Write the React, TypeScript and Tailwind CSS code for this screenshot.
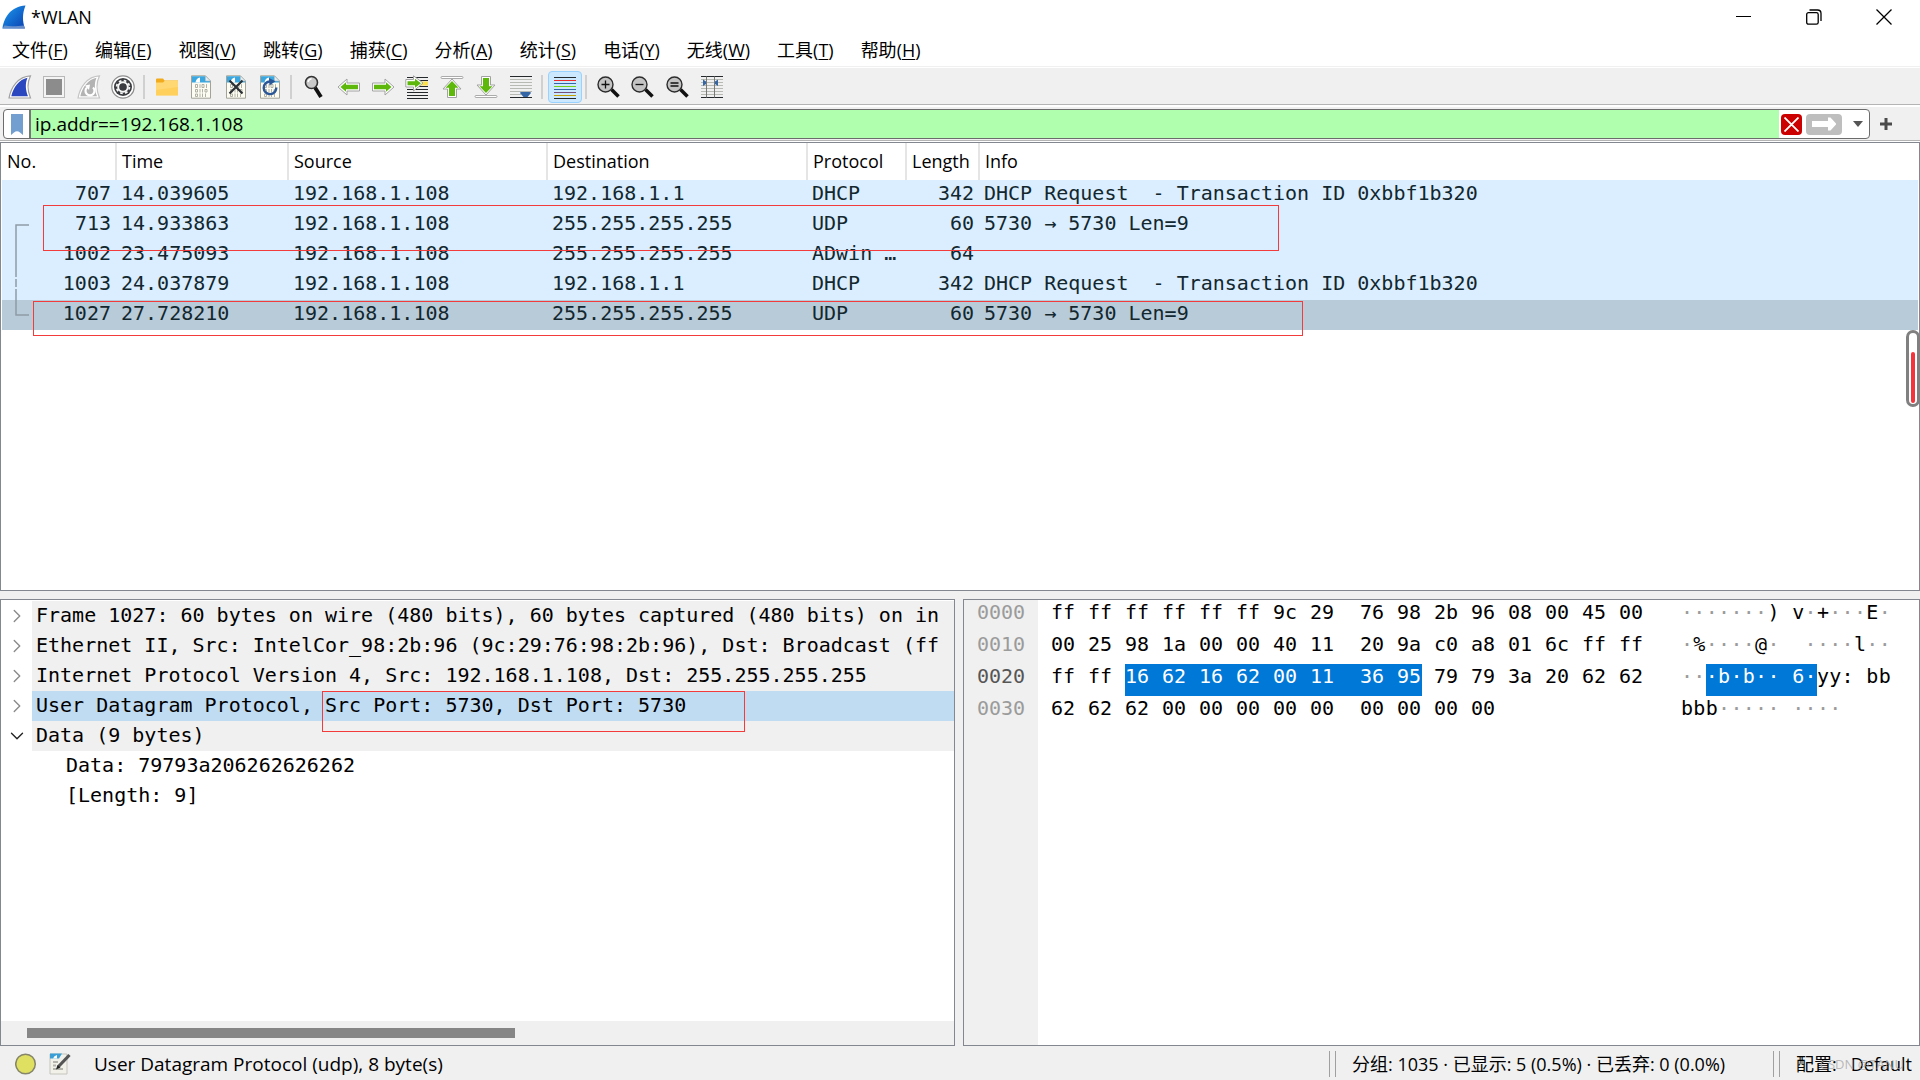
import React from "react";
import { ChevronDown, ChevronRight } from "lucide-react";

const menus = [
  ["文件", "F"],
  ["编辑", "E"],
  ["视图", "V"],
  ["跳转", "G"],
  ["捕获", "C"],
  ["分析", "A"],
  ["统计", "S"],
  ["电话", "Y"],
  ["无线", "W"],
  ["工具", "T"],
  ["帮助", "H"],
];

const columns = [
  { name: "No.", width: "w-[114px]" },
  { name: "Time", width: "w-[172px]" },
  { name: "Source", width: "w-[259px]" },
  { name: "Destination", width: "w-[260px]" },
  { name: "Protocol", width: "w-[99px]" },
  { name: "Length", width: "w-[73px]" },
  { name: "Info", width: "" },
];

const packets = [
  { no: 707, time: "14.039605", src: "192.168.1.108", dst: "192.168.1.1", proto: "DHCP", len: 342, info: "DHCP Request  - Transaction ID 0xbbf1b320" },
  { no: 713, time: "14.933863", src: "192.168.1.108", dst: "255.255.255.255", proto: "UDP", len: 60, info: "5730 → 5730 Len=9" },
  { no: 1002, time: "23.475093", src: "192.168.1.108", dst: "255.255.255.255", proto: "ADwin …", len: 64, info: "" },
  { no: 1003, time: "24.037879", src: "192.168.1.108", dst: "192.168.1.1", proto: "DHCP", len: 342, info: "DHCP Request  - Transaction ID 0xbbf1b320" },
  { no: 1027, time: "27.728210", src: "192.168.1.108", dst: "255.255.255.255", proto: "UDP", len: 60, info: "5730 → 5730 Len=9" },
];

const details = [
  "Frame 1027: 60 bytes on wire (480 bits), 60 bytes captured (480 bits) on in",
  "Ethernet II, Src: IntelCor_98:2b:96 (9c:29:76:98:2b:96), Dst: Broadcast (ff",
  "Internet Protocol Version 4, Src: 192.168.1.108, Dst: 255.255.255.255",
  "User Datagram Protocol, Src Port: 5730, Dst Port: 5730",
  "Data (9 bytes)",
];

const hexRows = [
  { offset: "0000", bytes: "ff ff ff ff ff ff 9c 29 76 98 2b 96 08 00 45 00", ascii: "·······)v·+···E·" },
  { offset: "0010", bytes: "00 25 98 1a 00 00 40 11 20 9a c0 a8 01 6c ff ff", ascii: "·%····@· ····l··" },
  { offset: "0020", bytes: "ff ff 16 62 16 62 00 11 36 95 79 79 3a 20 62 62", ascii: "···b·b··6·yy: bb" },
  { offset: "0030", bytes: "62 62 62 00 00 00 00 00 00 00 00 00", ascii: "bbb·········" },
];

// the udp header is bytes 2..9 of row 0x20
const isSelected = (row: number, i: number) => row === 2 && i >= 2 && i <= 9;

function Svg({ children }: { children: React.ReactNode }) {
  return (
    <svg width="24" height="24" viewBox="0 0 24 24" fill="none" aria-hidden="true" className="shrink-0">
      {children}
    </svg>
  );
}

function LogoIcon() {
  return (
    <svg width="24" height="24" viewBox="0 0 24 24" aria-hidden="true">
      <defs>
        <linearGradient id="fin" x1="0" y1="0" x2="1" y2="1">
          <stop offset="0" stopColor="#1c9cf0" />
          <stop offset="1" stopColor="#0a3fb0" />
        </linearGradient>
      </defs>
      <path d="M0.5 23.5C2 12 9 1.500 23.500 0.500C20 9 20.500 17 23 23.500Z" fill="url(#fin)" />
      <path d="M0.500 23.500L2.500 20.500C9 22 16 21 22 20.500L23 23.500Z" fill="#7d9dd0" opacity="0.800" />
    </svg>
  );
}

function FinIcon({ gray = false }: { gray?: boolean }) {
  return (
    <Svg>
      <path d="M1 23C3 12 10 1.500 22.500 0.800C19 8 19.500 16 22.500 23Z" fill="#fff" stroke={gray ? "#c4c4c4" : "#a0a0a0"} strokeWidth="1.200" />
      <path d="M3.300 21.300C5.500 12 11 4.500 19.500 2.800C17 9 17.500 15 20 21.300Z" fill={gray ? "#b3b3b3" : "#2b47c0"} />
      {gray && (
        <>
          <path d="M10 12.500A4.500 4.500 0 1 0 16 12.500" stroke="#fff" strokeWidth="2.200" />
          <path d="M8 10.500L13 9.500L12 15Z" fill="#fff" />
        </>
      )}
    </Svg>
  );
}

function StopIcon() {
  return (
    <Svg>
      <rect x="1.500" y="1.500" width="21" height="21" fill="#f4f4f4" stroke="#b8b8b8" />
      <rect x="4" y="4" width="16" height="16" fill="#8c8c8c" />
    </Svg>
  );
}

function GearIcon() {
  return (
    <Svg>
      <circle cx="12" cy="12" r="11.200" fill="#fff" stroke="#8e8e8e" strokeWidth="1.200" />
      <circle cx="12" cy="12" r="9" fill="#3a3c3f" />
      <circle cx="12" cy="12" r="4.800" stroke="#f5f5f5" strokeWidth="2" />
      <circle cx="12" cy="12" r="6.400" stroke="#f5f5f5" strokeWidth="1.800" strokeDasharray="2.600 2.427" />
      <circle cx="12" cy="12" r="3.200" fill="#3a3c3f" />
    </Svg>
  );
}

function FolderIcon() {
  return (
    <Svg>
      <path d="M1 4.500Q1 3.500 2 3.500H8L9.500 5.500H23V19.500H1Z" fill="#f2ab1c" />
      <path d="M1 7.500H8L10 5.500H22Q23 5.500 23 6.500V20.500H1Z" fill="#ffd773" />
      <path d="M1 15L23 12V20.500H1Z" fill="#ffcb4d" opacity="0.600" />
    </Svg>
  );
}

function FileIcon({ kind }: { kind?: string }) {
  return (
    <Svg>
      <path d="M2.500 0.800H16.500L21.500 6V23.200H2.500Z" fill="#fcfcf2" stroke="#a3a397" />
      <path d="M3 1.200H16.500V6H21V7.500H3Z" fill="#3aa7e0" />
      <path d="M6.500 7.500C7 4.500 8.500 3 11 2.500V7.500Z" fill="#fff" />
      <path d="M16.500 1V6H21.500Z" fill="#e4edf2" stroke="#a3b3bb" strokeWidth="0.600" />
      <g stroke="#a8a89c" strokeWidth="0.900">
        <path d="M6.500 9.500H8.500V12.500H6.500ZM11 9.200V13M13 9.500H15V12.500H13ZM17.500 9.200V13" />
        <path d="M6.500 14.500H8.500V17H6.500ZM11 14V17.500M13.500 14V17.500M16 14.500H18V17H16Z" />
        <path d="M6.500 19H8.500V21.500H6.500ZM11 18.500V22M13.500 18.500V22M16.500 18.500V22" />
      </g>
      {kind === "close" && <path d="M5.500 5.500L18.500 18.500M18.500 5.500L5.500 18.500" stroke="#2b3035" strokeWidth="2.200" />}
      {kind === "reload" && (
        <>
          <path d="M12 6.500A6.300 6.300 0 1 0 18.300 12.500" stroke="#2b5796" strokeWidth="2.400" />
          <path d="M11 3L17.500 6.200L11.500 10.500Z" fill="#2b5796" />
        </>
      )}
    </Svg>
  );
}

function FindIcon() {
  return (
    <Svg>
      <path d="M13 12.500L19 22" stroke="#111" strokeWidth="3.800" />
      <circle cx="9.500" cy="7.500" r="6" fill="#c9c9c9" stroke="#333" strokeWidth="1.600" />
      <path d="M6 7A4 4 0 0 1 9.500 3.800" stroke="#fff" strokeWidth="1.500" />
    </Svg>
  );
}

function ZoomIcon({ kind }: { kind: string }) {
  return (
    <Svg>
      <path d="M14.500 14.500L21.500 21.500" stroke="#111" strokeWidth="3.600" />
      <circle cx="8.500" cy="9.500" r="7.500" fill="#c3c3c3" stroke="#2c2c2c" strokeWidth="1.400" />
      {kind === "in" && <path d="M4.500 9.500H12.500M8.500 5.500V13.500" stroke="#111" strokeWidth="1.300" />}
      {kind === "out" && <path d="M4.500 9.500H12.500" stroke="#111" strokeWidth="1.300" />}
      {kind === "reset" && <path d="M4.500 8H12.500M4.500 11H12.500" stroke="#111" strokeWidth="1.300" />}
    </Svg>
  );
}

function ArrowIcon({ dir }: { dir: "left" | "right" }) {
  return (
    <Svg>
      <g transform={dir === "right" ? "translate(24 0) scale(-1 1)" : undefined}>
        <path d="M1 12L10 4V8H22.500V16H10V20Z" fill="#fff" stroke="#a2a2a2" strokeLinejoin="round" />
        <path d="M3.500 12L9 7.200V9.700H21V14.300H9V16.800Z" fill="#5db80b" />
      </g>
    </Svg>
  );
}

function GotoIcon() {
  return (
    <Svg>
      <path d="M2 2.500H23M14 5.500H23M14 11.500H23M2 14.500H23M2 17.500H23M2 20.500H23M2 23.500H23" stroke="#26292c" />
      <path d="M15 8.500H23" stroke="#fbe14c" strokeWidth="4" />
      <path d="M0.800 4.500H8.500V0.800L18 8L8.500 16V12H0.800Z" fill="#fff" stroke="#a2a2a2" strokeLinejoin="round" />
      <path d="M2.500 6.200H10V3.800L16 8.200L10 12.800V10.300H2.500Z" fill="#5db80b" />
    </Svg>
  );
}

function EdgeIcon({ dir }: { dir: "top" | "bottom" }) {
  return (
    <Svg>
      <g transform={dir === "bottom" ? "translate(0 24) scale(1 -1)" : undefined}>
        <rect x="1" y="1.500" width="22" height="2" rx="1" fill="#fff" stroke="#a2a2a2" strokeWidth="0.900" />
        <path d="M12 4L21 14H16.500V22.500H7.500V14H3Z" fill="#fff" stroke="#a2a2a2" strokeLinejoin="round" />
        <path d="M12 6L18.500 12.800H15V21H9V12.800H5.500Z" fill="#5db80b" />
      </g>
    </Svg>
  );
}

function AutoScrollIcon() {
  return (
    <Svg>
      <path d="M1 1.500H23M1 22.500H23" stroke="#26292c" />
      <path d="M1 4.500H23M1 7.500H23M1 10.500H23M1 13.500H23M1 16.500H23M1 19.500H12" stroke="#b7bab2" />
      <path d="M11 18Q11 17 12.500 17H20.500Q22 17 22 18L18.500 22H14.500Z" fill="#3465a4" />
    </Svg>
  );
}

function ColorizeIcon() {
  return (
    <Svg>
      <path d="M1 2.500H23" stroke="#26292c" />
      <path d="M1 5.500H23" stroke="#ef2929" />
      <path d="M1 8.500H23" stroke="#3465a4" />
      <path d="M1 11.500H23" stroke="#73d216" />
      <path d="M1 14.500H23" stroke="#3465a4" />
      <path d="M1 17.500H23" stroke="#75507b" />
      <path d="M1 20.500H23" stroke="#c4a000" />
      <path d="M1 23.500H23" stroke="#26292c" />
    </Svg>
  );
}

function ResizeIcon() {
  return (
    <Svg>
      <path d="M1 4.500H23M1 7.500H23M1 10.500H23M1 13.500H23M1 16.500H23M1 19.500H23" stroke="#b7bab2" />
      <path d="M1 1.500H23M1 22.500H23" stroke="#26292c" />
      <path d="M6.500 1.500V22.500M14.500 1.500V22.500" stroke="#777a75" />
      <path d="M3 4.500L6 6.500V9L3 11ZM18 4.500L15 6.500V9L18 11Z" fill="#3465a4" />
    </Svg>
  );
}

function ToolButton({ label, active, children }: { label: string; active?: boolean; children: React.ReactNode }) {
  return (
    <button
      aria-label={label}
      className={
        active
          ? "flex h-8 w-[34px] items-center justify-center rounded-sm border border-[#99d1ff] bg-[#cce8ff]"
          : "flex h-8 flex-1 items-center justify-center"
      }
    >
      {children}
    </button>
  );
}

function Separator() {
  return (
    <div className="flex w-[10px] shrink-0 pl-[3px]">
      <div className="h-6 w-[2px] bg-[#d0d0d0]" />
    </div>
  );
}

function TitleBar() {
  return (
    <header className="flex h-[34px] items-center bg-white pl-[2px]">
      <LogoIcon />
      <h1 className="ml-[5px]">*WLAN</h1>
      <div className="ml-auto flex items-center gap-[54px] pr-[28px]">
        <button aria-label="Minimize">
          <svg width="16" height="16" viewBox="0 0 16 16" stroke="#000">
            <path d="M0 7.500H15" />
          </svg>
        </button>
        <button aria-label="Restore">
          <svg width="16" height="16" viewBox="0 0 16 16" fill="none" stroke="#000" strokeWidth="1.300">
            <rect x="0.700" y="3.700" width="11.500" height="11.500" rx="1.800" />
            <path d="M3.500 1H11.500Q15 1 15 4.500V12" />
          </svg>
        </button>
        <button aria-label="Close">
          <svg width="16" height="16" viewBox="0 0 16 16" stroke="#000" strokeWidth="1.300">
            <path d="M0.500 0.500L15.500 15.500M15.500 0.500L0.500 15.500" />
          </svg>
        </button>
      </div>
    </header>
  );
}

function Toolbar() {
  return (
    <div className="flex h-[36px] items-center pl-[3px] pt-[2px]">
      <div className="flex w-[137px]">
        <ToolButton label="Start"><FinIcon /></ToolButton>
        <ToolButton label="Stop"><StopIcon /></ToolButton>
        <ToolButton label="Restart"><FinIcon gray /></ToolButton>
        <ToolButton label="Options"><GearIcon /></ToolButton>
      </div>
      <Separator />
      <div className="flex w-[137px]">
        <ToolButton label="Open"><FolderIcon /></ToolButton>
        <ToolButton label="Save"><FileIcon /></ToolButton>
        <ToolButton label="Close file"><FileIcon kind="close" /></ToolButton>
        <ToolButton label="Reload"><FileIcon kind="reload" /></ToolButton>
      </div>
      <Separator />
      <div className="flex w-[241px]">
        <ToolButton label="Find"><FindIcon /></ToolButton>
        <ToolButton label="Previous"><ArrowIcon dir="left" /></ToolButton>
        <ToolButton label="Next"><ArrowIcon dir="right" /></ToolButton>
        <ToolButton label="Go to packet"><GotoIcon /></ToolButton>
        <ToolButton label="First"><EdgeIcon dir="top" /></ToolButton>
        <ToolButton label="Last"><EdgeIcon dir="bottom" /></ToolButton>
        <ToolButton label="Auto scroll"><AutoScrollIcon /></ToolButton>
      </div>
      <Separator />
      <ToolButton label="Colorize" active><ColorizeIcon /></ToolButton>
      <Separator />
      <div className="flex w-[137px]">
        <ToolButton label="Zoom in"><ZoomIcon kind="in" /></ToolButton>
        <ToolButton label="Zoom out"><ZoomIcon kind="out" /></ToolButton>
        <ToolButton label="Normal size"><ZoomIcon kind="reset" /></ToolButton>
        <ToolButton label="Resize columns"><ResizeIcon /></ToolButton>
      </div>
    </div>
  );
}

function FilterBar() {
  return (
    <div className="flex h-[34px] items-end border-t-2 border-white pl-[3px]">
      <div className="flex h-[30px] flex-1 items-center overflow-hidden rounded border border-[#6c6c6c] bg-white">
        <button aria-label="Bookmark" className="flex h-full w-[27px] items-center justify-center border-r-2 border-[#767676]">
          <svg width="12" height="21" viewBox="0 0 12 21">
            <path d="M0 0H12V21L9 18.500Q6 16 3 18.500L0 21Z" fill="#729fcf" />
          </svg>
        </button>
        <input
          aria-label="Display filter"
          className="h-full flex-1 bg-[#afffaf] pl-1 text-[19px] outline-none"
          defaultValue="ip.addr==192.168.1.108"
        />
        <button aria-label="Clear" className="ml-[2px] flex h-[21px] w-[21px] items-center justify-center rounded-sm bg-[#cc0000]">
          <svg width="15" height="15" viewBox="0 0 15 15" stroke="#fff" strokeWidth="1.800">
            <path d="M0.500 0.500L14.500 14.500M14.500 0.500L0.500 14.500" />
          </svg>
        </button>
        <button aria-label="Apply" className="ml-1 flex h-[21px] w-9 items-center justify-center rounded-sm bg-[#bebebe]">
          <svg width="24" height="14" viewBox="0 0 24 14" fill="#fff">
            <path d="M0 4H16V0.500H18.500L24 6.500V7.500L18.500 13.500H16V10H0Z" />
          </svg>
        </button>
        <button aria-label="History" className="flex w-[27px] justify-center pl-1">
          <svg width="10" height="6" viewBox="0 0 10 6">
            <path d="M0 0H10L5 6Z" fill="#555" />
          </svg>
        </button>
      </div>
      <button aria-label="Add filter" className="ml-[10px] mr-[28px] flex h-[30px] items-center">
        <svg width="12" height="12" viewBox="0 0 12 12" stroke="#4a4a4a" strokeWidth="3">
          <path d="M6 0V12M0 6H12" />
        </svg>
      </button>
    </div>
  );
}

function PacketList() {
  return (
    <section className="relative min-h-0 flex-1 border border-[#828790] bg-white px-px">
      <table className="w-full table-fixed">
        <thead>
          <tr className="h-[37px]">
            {columns.map((c) => (
              <th key={c.name} className={`${c.width} border-r-2 border-[#e5e5e5] p-0 pb-[2px] pl-[5px] text-left font-normal last:border-r-0`}>
                {c.name}
              </th>
            ))}
          </tr>
        </thead>
        <tbody className="whitespace-pre font-['DejaVu_Sans_Mono','Noto_Sans_CJK_SC',monospace] text-[20px] leading-6 text-[#12272e]">
          {packets.map((p) => (
            <tr key={p.no} className={p.no === 1027 ? "h-[30px] bg-[#b8cbd9]" : "h-[30px] bg-[#daeeff]"}>
              <td className="p-0 pr-[5px] pb-[5px] text-right">{p.no}</td>
              <td className="p-0 pb-[5px] pl-[5px]">{p.time}</td>
              <td className="p-0 pb-[5px] pl-[5px]">{p.src}</td>
              <td className="p-0 pb-[5px] pl-[5px]">{p.dst}</td>
              <td className="p-0 pb-[5px] pl-[5px]">{p.proto}</td>
              <td className="p-0 pr-[5px] pb-[5px] text-right">{p.len}</td>
              <td className="p-0 pb-[5px] pl-[5px]">{p.info}</td>
            </tr>
          ))}
        </tbody>
      </table>

      {/* related packets bracket */}
      <svg width="14" height="92" viewBox="0 0 14 92" fill="none" stroke="#8e9ca6" strokeWidth="1.500" className="absolute left-[14px] top-[81px]">
        <path d="M14 1H1V53M1 73V91H14" />
        <path d="M1 55V73" strokeDasharray="8 2" />
      </svg>

      {/* marked up packets */}
      <div className="absolute left-[42px] top-[62px] h-[46px] w-[1236px] border border-[#f33b3b]" />
      <div className="absolute left-[32px] top-[158px] h-[35px] w-[1270px] border border-[#f33b3b]" />

      <div className="absolute -right-px top-[187px] flex h-[77px] w-[14px] items-end justify-center rounded-full border-3 border-[#808080] bg-white pb-px">
        <div className="h-[51px] w-1 rounded-full bg-[#f5333a]" />
      </div>
    </section>
  );
}

function DetailsPane() {
  return (
    <section className="relative flex min-w-0 flex-[955] flex-col overflow-hidden border border-[#828790] bg-white pt-px">
      <ul className="whitespace-pre font-['DejaVu_Sans_Mono','Noto_Sans_CJK_SC',monospace] text-[20px] leading-7">
        {details.map((line, i) => (
          <li key={line} className="flex h-[30px]">
            <button aria-label="Toggle" className="flex w-[31px] shrink-0 items-center justify-center">
              {i === 4 ? <ChevronDown size={22} strokeWidth={1.5} color="#222" /> : <ChevronRight size={22} strokeWidth={1.5} color="#8a8a8a" />}
            </button>
            <span className={i === 3 ? "flex-1 bg-[#c0dcf3] pl-1" : "flex-1 bg-[#f0f0f0] pl-1"}>{line}</span>
          </li>
        ))}
        <li className="h-[30px] pl-[65px]">Data: 79793a206262626262</li>
        <li className="h-[30px] pl-[65px]">[Length: 9]</li>
      </ul>
      <div className="absolute left-[321px] top-[91px] h-[41px] w-[423px] border border-[#f33b3b]" />
      <div className="mt-auto flex h-6 items-center bg-[#f0f0f0] pl-[26px]">
        <div className="h-[10px] w-[488px] bg-[#868686]" />
      </div>
    </section>
  );
}

function byteClass(row: number, i: number) {
  if (isSelected(row, i)) {
    if (i === 9) return "mr-3 w-[25px] bg-[#0078d7] text-white";
    if (i === 7) return "w-[50px] bg-[#0078d7] text-white";
    return "w-[37px] bg-[#0078d7] text-white";
  }
  return i === 7 ? "w-[50px]" : "w-[37px]";
}

function BytesPane() {
  return (
    <section className="flex min-w-0 flex-[957] overflow-hidden border border-[#828790] bg-white font-['DejaVu_Sans_Mono','Noto_Sans_CJK_SC',monospace] text-[20px] leading-6">
      <div className="w-[74px] bg-[#f0f0f0] pl-[13px] text-[#9b9b9b]">
        {hexRows.map((r, row) => (
          <div key={r.offset} className={row === 2 ? "h-8 text-[#565656]" : "h-8"}>
            {r.offset}
          </div>
        ))}
      </div>
      <div className="pl-[13px]">
        {hexRows.map((r, row) => (
          <div key={r.offset} className="flex h-8">
            <div className="flex w-[630px]">
              {r.bytes.split(" ").map((b, i) => (
                <span key={i} className={byteClass(row, i)}>{b}</span>
              ))}
            </div>
            <div className="grid w-[210px] grid-cols-17 whitespace-pre">
              {r.ascii.split("").map((ch, i) => (
                <React.Fragment key={i}>
                  {i === 8 && <span className={isSelected(row, i) ? "bg-[#0078d7]" : ""} />}
                  <span className={isSelected(row, i) ? "bg-[#0078d7] text-white" : ch === "·" ? "text-[#9b9b9b]" : ""}>{ch}</span>
                </React.Fragment>
              ))}
            </div>
          </div>
        ))}
      </div>
    </section>
  );
}

function Grip() {
  return <div className="h-[26px] w-[7px] border-x border-[#a0a0a0]" />;
}

function StatusBar() {
  return (
    <footer className="relative flex h-[34px] shrink-0 items-center pl-[15px] pt-px">
      <button aria-label="Expert info">
        <svg width="22" height="22" viewBox="0 0 22 22" className="block">
          <circle cx="10.500" cy="11" r="9.800" fill="#dfdf62" stroke="#85856a" strokeWidth="1.500" />
        </svg>
      </button>
      <button aria-label="Capture comment" className="ml-3">
        <svg width="23" height="22" viewBox="0 0 23 22" fill="none" className="block">
          <path d="M1 1H18V21H1Z" fill="#f1f1ea" stroke="#c4c4bc" />
          <path d="M1 0.500H13L10 5.500H1Z" fill="#3a9fd6" />
          <path d="M4 5.500Q5 2.500 8 2V5.500Z" fill="#fff" />
          <path d="M4 9H9M4 12.500H7M4 16H14" stroke="#b4b4ac" strokeWidth="2" />
          <path d="M20.500 2L9.500 13.500" stroke="#555" strokeWidth="3.200" />
          <path d="M7 16.500L8.500 12L11.500 14.500Z" fill="#222" />
        </svg>
      </button>
      <p className="ml-[22px] flex-1 text-[19px]">User Datagram Protocol (udp), 8 byte(s)</p>
      <Grip />
      <p className="ml-4 w-[421px]">分组: 1035 · 已显示: 5 (0.5%) · 已丢弃: 0 (0.0%)</p>
      <Grip />
      <p className="ml-4 flex w-[124px] gap-[14px]">
        <span>配置:</span>
        <span>Default</span>
      </p>
      <span className="absolute right-4 text-[13px] text-[#a9a9a9]/80">CSDN @TANU</span>
    </footer>
  );
}

export default function App() {
  return (
    <div className="flex h-screen flex-col overflow-hidden bg-[#f0f0f0] font-['Open_Sans','Noto_Sans_CJK_SC',sans-serif] text-[18px] leading-6 text-black">
      <TitleBar />
      <nav className="flex h-[32px] items-center gap-[27px] bg-white pl-3">
        {menus.map(([name, key]) => (
          <button key={key} className="whitespace-nowrap">
            {name}(<span className="underline underline-offset-2">{key}</span>)
          </button>
        ))}
      </nav>
      <div className="h-[2px] shrink-0 border-b border-white" />
      <Toolbar />
      <div className="h-px shrink-0 bg-[#b4b4b4]" />
      <FilterBar />
      <div className="mt-px h-px shrink-0 bg-[#b4b4b4]" />
      <div className="h-px shrink-0 bg-white" />
      <main className="flex min-h-0 flex-1 flex-col gap-2">
        <PacketList />
        <div className="flex min-h-0 flex-1 gap-2">
          <DetailsPane />
          <BytesPane />
        </div>
      </main>
      <StatusBar />
    </div>
  );
}
